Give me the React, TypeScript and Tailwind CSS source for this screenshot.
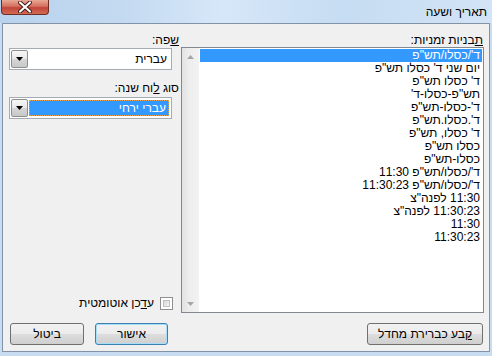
import React from 'react';

const items = [
  'ד\'/כסלו/תש"פ',
  'יום שני ד\' כסלו תש"פ',
  'ד\' כסלו תש"פ',
  'תש"פ-כסלו-ד\'',
  'ד\'-כסלו-תש"פ',
  'ד\'.כסלו.תש"פ',
  'ד\' כסלו, תש"פ',
  'כסלו תש"פ',
  'כסלו-תש"פ',
  'ד\'/כסלו/תש"פ 11:30',
  'ד\'/כסלו/תש"פ 11:30:23',
  '11:30 לפנה"צ',
  '11:30:23 לפנה"צ',
  '11:30',
  '11:30:23',
];

const btn =
  'h-[22px] rounded-[3px] border flex items-center justify-center bg-[linear-gradient(#f2f2f2_0%,#ebebeb_48%,#dddddd_52%,#cfcfcf_100%)]';

const DropButton = () => (
  <div className="w-[17px] h-full flex items-center justify-center border border-[#8e8f8f] rounded-[2px] bg-[linear-gradient(#f6f6f6_0%,#e8e8e8_50%,#d6d6d6_52%,#c8c8c8_100%)]">
    <svg width="7" height="4" viewBox="0 0 7 4">
      <path d="M0 0 H7 L3.5 4 Z" fill="#000" />
    </svg>
  </div>
);

const ScrollArrow = ({ up }: { up?: boolean }) => (
  <div className="h-[17px] flex items-center justify-center">
    <svg width="7" height="4" viewBox="0 0 7 4">
      <path d={up ? 'M0 4 H7 L3.5 0 Z' : 'M0 0 H7 L3.5 4 Z'} fill="#a6a6a6" />
    </svg>
  </div>
);

export default function App() {
  return (
    <div className="w-[492px] h-[356px] flex flex-col overflow-hidden bg-[#c9ddf2] text-[12px] leading-[14px] text-black font-['Liberation_Sans','DejaVu_Sans',sans-serif]">
      {/* Title bar */}
      <div className="h-[23px] flex items-start justify-between bg-[linear-gradient(90deg,#b9d2ed_0%,#c4daf1_25%,#d6e7f8_45%,#c6dcf2_70%,#d2e4f6_100%)]">
        <div className="ml-[1px] w-[48px] h-[15px] rounded-b-[4px] border border-t-0 border-[#6b2f28] flex items-center justify-center bg-[linear-gradient(#e9a795_0%,#d4705e_45%,#c2453a_55%,#d26a55_100%)]">
          <svg width="14" height="12" viewBox="0 0 14 12">
            <path d="M2 1.5 L12 10.5 M12 1.5 L2 10.5" stroke="#3b1a16" strokeWidth="4" strokeLinecap="round" />
            <path d="M2 1.5 L12 10.5 M12 1.5 L2 10.5" stroke="#fff" strokeWidth="2.2" strokeLinecap="round" />
          </svg>
        </div>
        <div dir="rtl" className="pr-[5px] pt-[5px] leading-[14px]">תאריך ושעה</div>
      </div>

      {/* Client area */}
      <div
        dir="rtl"
        className="mx-[2px] h-[329px] border border-[#8393a7] bg-[#f0f0f0] flex flex-col pt-[9px] pr-[5px] pl-[6px] pb-[6px]"
      >
        <div className="flex h-[280px] gap-[2px]">
          {/* Formats list */}
          <div className="w-[303px] flex flex-col">
            <div className="h-[14px] pr-[1px]">
              <u>ת</u>בניות זמניות:
            </div>
            <div className="h-[266px] border border-[#828790] bg-white flex">
              <div className="flex-1 pt-[1px] px-[1px]">
                {items.map((t, i) => (
                  <div
                    key={t}
                    className={
                      'h-[13px] leading-[13px] pr-[2px] whitespace-nowrap ' +
                      (i === 0 ? 'bg-[#3399ff] text-white' : '')
                    }
                  >
                    {t}
                  </div>
                ))}
              </div>
              <div className="w-[17px] h-full flex flex-col justify-between bg-[linear-gradient(90deg,#e2e2e2,#ededed_40%,#f2f2f2)]">
                <ScrollArrow up />
                <ScrollArrow />
              </div>
            </div>
          </div>

          {/* Language / calendar */}
          <div className="flex-1 flex flex-col">
            <div className="h-[14px]">
              <u>ש</u>פה:
            </div>
            <div className="mt-[1px] w-[163px] h-[22px] self-end border border-[#a5acb5] bg-white flex items-center p-[1px]">
              <div className="flex-1 pr-[3px]">עברית</div>
              <DropButton />
            </div>
            <div className="mt-[11px] h-[14px]">
              סוג <u>ל</u>וח שנה:
            </div>
            <div className="mt-[2px] w-[163px] h-[22px] self-end border border-[#a5acb5] bg-white flex items-center p-[1px]">
              <div className="flex-1 h-full p-[1px]">
                <div className="h-full bg-[#3399ff] text-white border border-dotted border-[#e8a050] pr-[2px] flex items-center">
                  עברי ירחי
                </div>
              </div>
              <DropButton />
            </div>
            <div className="flex-1" />
            <div className="mb-[3px] mr-[6px] flex items-center gap-[6px]">
              <div className="w-[13px] h-[13px] border border-[#8e8f8f] bg-white p-[2px]">
                <div className="w-full h-full border border-[#c0c0c0] bg-[linear-gradient(135deg,#d6d6d6,#f6f6f6)]" />
              </div>
              <div>
                ע<u>ד</u>כן אוטומטית
              </div>
            </div>
          </div>
        </div>

        {/* Buttons */}
        <div className="mt-[10px] flex items-center">
          <div className={btn + ' w-[116px] mr-[1px] border-[#707070]'}>
            <span>
              <u>ק</u>בע כברירת מחדל
            </span>
          </div>
          <div className="flex-1" />
          <div
            className={
              btn +
              ' w-[73px] border-[#3c7fb1] shadow-[inset_0_0_0_1px_#a9dcf7]'
            }
          >
            אישור
          </div>
          <div className={btn + ' w-[74px] ml-[1px] mr-[11px] border-[#707070]'}>ביטול</div>
        </div>
      </div>
      <div className="flex-1" />
    </div>
  );
}
